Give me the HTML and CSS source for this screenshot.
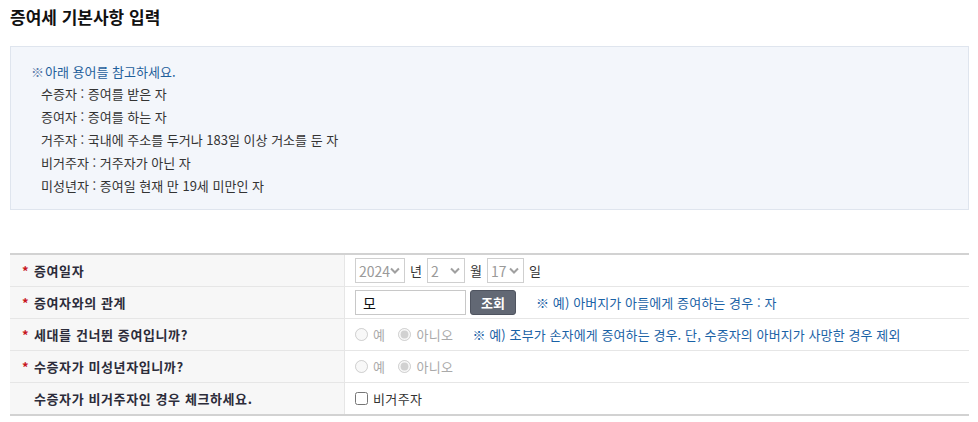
FILE: index.html
```html
<!DOCTYPE html>
<html lang="ko">
<head>
  <meta charset="UTF-8">
  <title>증여세 기본사항 입력</title>
  <link rel="stylesheet" href="styles.css">
</head>
<body>

  <h2 class="page-title">증여세 기본사항 입력</h2>

  <div class="info-box">
    <p class="info-head"><span class="mark">※</span>아래 용어를 참고하세요.</p>
    <ul class="term-list">
      <li>수증자 : 증여를 받은 자</li>
      <li>증여자 : 증여를 하는 자</li>
      <li>거주자 : 국내에 주소를 두거나 183일 이상 거소를 둔 자</li>
      <li>비거주자 : 거주자가 아닌 자</li>
      <li>미성년자 : 증여일 현재 만 19세 미만인 자</li>
    </ul>
  </div>

  <table class="form-table">
    <tr>
      <th><span class="req">*</span>증여일자</th>
      <td>
        <div class="field">
          <div class="sel w50"><span>2024</span><svg width="10" height="7" viewBox="0 0 10 7"><path d="M1 1.5l4 4 4-4" fill="none" stroke="#a0a0a0" stroke-width="2"/></svg></div>
          <span class="unit">년</span>
          <div class="sel w38"><span>2</span><svg width="10" height="7" viewBox="0 0 10 7"><path d="M1 1.5l4 4 4-4" fill="none" stroke="#a0a0a0" stroke-width="2"/></svg></div>
          <span class="unit">월</span>
          <div class="sel w37"><span>17</span><svg width="10" height="7" viewBox="0 0 10 7"><path d="M1 1.5l4 4 4-4" fill="none" stroke="#a0a0a0" stroke-width="2"/></svg></div>
          <span class="unit">일</span>
        </div>
      </td>
    </tr>
    <tr>
      <th><span class="req">*</span>증여자와의 관계</th>
      <td>
        <div class="field">
          <input type="text" class="txt" value="모">
          <button class="btn">조회</button>
          <span class="note">※ 예) 아버지가 아들에게 증여하는 경우 : 자</span>
        </div>
      </td>
    </tr>
    <tr>
      <th><span class="req">*</span>세대를 건너뛴 증여입니까?</th>
      <td>
        <div class="field">
          <label class="opt"><input type="radio" name="skip" disabled>예</label>
          <label class="opt"><input type="radio" name="skip" checked disabled>아니오</label>
          <span class="note gap">※ 예) 조부가 손자에게 증여하는 경우. 단, 수증자의 아버지가 사망한 경우 제외</span>
        </div>
      </td>
    </tr>
    <tr>
      <th><span class="req">*</span>수증자가 미성년자입니까?</th>
      <td>
        <div class="field">
          <label class="opt"><input type="radio" name="minor" disabled>예</label>
          <label class="opt"><input type="radio" name="minor" checked disabled>아니오</label>
        </div>
      </td>
    </tr>
    <tr>
      <th><span class="req"></span>수증자가 비거주자인 경우 체크하세요.</th>
      <td>
        <div class="field">
          <label class="chk"><input type="checkbox">비거주자</label>
        </div>
      </td>
    </tr>
  </table>

</body>
</html>
```

FILE: styles.css
```css
body {
  margin: 0;
  padding: 0 9px 0 10px;
  font-family: "Noto Sans CJK KR", "Noto Sans", sans-serif;
  font-size: 13px;
  color: #333;
  background: #fff;
}

.page-title {
  margin: 0;
  padding-top: 5px;
  height: 41px;
  font-size: 17px;
  font-weight: 700;
  color: #111;
  line-height: 24px;
}

.info-box {
  background-color: #f3f6fb;
  border: 1px solid #dfe5ee;
  height: 162px;
  padding: 0 20px;
}

.info-head {
  margin: 15px 0 0 0;
  color: #1f5f9c;
  line-height: 20px;
}

.info-head .mark {
  color: #5a7aa8;
  margin-right: 1px;
}

.term-list {
  list-style: none;
  margin: 0;
  padding: 0 0 0 10px;
}

.term-list li {
  line-height: 23px;
}

.form-table {
  width: 100%;
  margin-top: 43px;
  border-collapse: collapse;
  border-top: 2px solid #d2d2d2;
  border-bottom: 2px solid #d2d2d2;
}

.form-table th,
.form-table td {
  height: 31px;
  padding: 0;
  border-bottom: 1px solid #e6e6e6;
}

.form-table th {
  width: 322px;
  background-color: #f7f7f7;
  border-right: 1px solid #e6e6e6;
  text-align: left;
  padding-left: 12px;
  font-weight: 700;
  color: #2c2c3a;
  letter-spacing: 0.6px;
}

.form-table td {
  padding-left: 10px;
}

.req {
  display: inline-block;
  width: 12px;
  color: #c8161d;
  font-weight: 700;
  letter-spacing: 0;
}

.field {
  display: flex;
  align-items: center;
}

.sel {
  display: flex;
  align-items: center;
  justify-content: space-between;
  box-sizing: border-box;
  height: 25px;
  border: 1px solid #cfcfcf;
  padding: 0 4px 0 3px;
  color: #9a9a9a;
  font-size: 14px;
}

.w50 { width: 50px; }
.w38 { width: 38px; }
.w37 { width: 37px; }

.unit {
  margin: 0 5px;
}

.txt {
  width: 111px;
  height: 25px;
  box-sizing: border-box;
  border: 1px solid #c8c8c8;
  padding: 0 7px;
  font-family: inherit;
  font-size: 14px;
  color: #111;
  outline: none;
}

.btn {
  margin-left: 4px;
  width: 46px;
  height: 25px;
  border: 1px solid #4f5460;
  border-radius: 3px;
  background-color: #626874;
  color: #fff;
  font-family: inherit;
  font-weight: 700;
  font-size: 13px;
  padding: 0;
}

.note {
  margin-left: 20px;
  color: #1a62a6;
  letter-spacing: 0.1px;
}

.note.gap {
  margin-left: 6px;
}

.opt,
.chk {
  display: flex;
  align-items: center;
  color: #aaa;
  margin-right: 13px;
  letter-spacing: 0.4px;
}

.opt input {
  margin: 0 5px 0 0;
  width: 13px;
  height: 13px;
}

.chk {
  color: #333;
}

.chk input {
  margin: 0 5px 0 0;
  width: 13px;
  height: 13px;
}
```
